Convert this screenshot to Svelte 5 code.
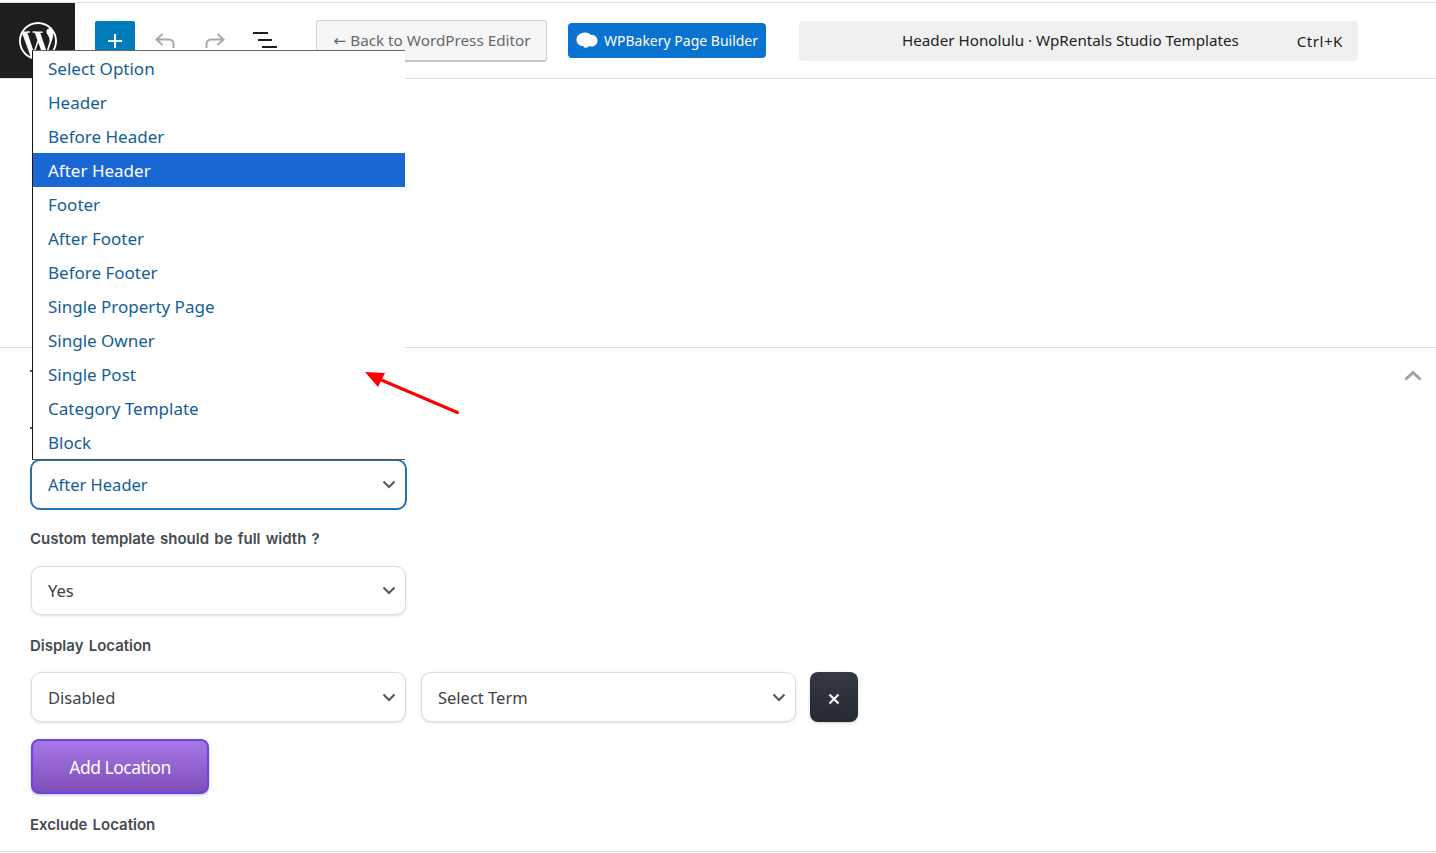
<script lang="ts">
  const options = [
    "Select Option",
    "Header",
    "Before Header",
    "After Header",
    "Footer",
    "After Footer",
    "Before Footer",
    "Single Property Page",
    "Single Owner",
    "Single Post",
    "Category Template",
    "Block"
  ];
  const selected = "After Header";
</script>

{#snippet chevron()}
  <svg class="chev" width="14" height="9" viewBox="0 0 14 9" aria-hidden="true">
    <path d="M1.5 1.5 7 7l5.5-5.5" fill="none" stroke="#50575e" stroke-width="2" />
  </svg>
{/snippet}

<div class="page">
  <header class="toolbar">
    <div class="wplogo">
      <svg width="38" height="38" viewBox="0 0 24 24" aria-hidden="true">
        <path fill="#fff" d="M21.469 6.825c.84 1.537 1.318 3.3 1.318 5.175 0 3.979-2.156 7.456-5.363 9.325l3.295-9.527c.615-1.54.82-2.771.82-3.864 0-.405-.026-.78-.07-1.11m-7.981.105c.647-.03 1.232-.105 1.232-.105.582-.075.514-.93-.067-.899 0 0-1.755.135-2.88.135-1.064 0-2.85-.15-2.85-.15-.585-.03-.661.855-.075.885 0 0 .54.061 1.125.09l1.68 4.605-2.37 7.08L5.354 6.9c.649-.03 1.234-.1 1.234-.1.585-.075.516-.93-.065-.896 0 0-1.746.138-2.874.138-.2 0-.438-.008-.69-.015C4.911 3.15 8.235 1.215 12 1.215c2.809 0 5.365 1.072 7.286 2.833-.046-.003-.091-.009-.141-.009-1.06 0-1.812.923-1.812 1.914 0 .89.513 1.643 1.06 2.531.411.72.89 1.643.89 2.977 0 .915-.354 1.994-.821 3.479l-1.075 3.585-3.9-11.61.001.014zM12 22.784c-1.059 0-2.081-.153-3.048-.437l3.237-9.406 3.315 9.087c.024.053.05.101.078.149-1.12.393-2.325.609-3.582.609M1.211 12c0-1.564.336-3.05.935-4.39L7.29 21.709C3.694 19.96 1.212 16.271 1.211 12M12 0C5.385 0 0 5.385 0 12s5.385 12 12 12 12-5.385 12-12S18.615 0 12 0" />
      </svg>
    </div>

    <div class="tools">
      <button class="plus" aria-label="Add block">
        <svg width="18" height="18" viewBox="0 0 18 18"><path d="M9 2v14M2 9h14" stroke="#fff" stroke-width="2" /></svg>
      </button>
      <span class="tool undo">
        <svg width="24" height="18" viewBox="0 0 24 18"><path d="M9.5 2 3.5 7.5l6 5.5M3.5 7.5H16c2.800 0 4.500 2 4.500 4.500V16" fill="none" stroke="#a7aaad" stroke-width="2" /></svg>
      </span>
      <span class="tool redo">
        <svg width="24" height="18" viewBox="0 0 24 18"><path d="M14.500 2l6 5.500-6 5.500M20.500 7.500H8C5.200 7.500 3.500 9.500 3.500 12V16" fill="none" stroke="#a7aaad" stroke-width="2" /></svg>
      </span>
      <span class="tool list">
        <svg width="24" height="18" viewBox="0 0 24 18"><path d="M0 1h15M5 8h14M9 15h15" stroke="#1e1e1e" stroke-width="2" /></svg>
      </span>
    </div>

    <button class="back"><span class="ar">←</span> Back to WordPress Editor</button>

    <button class="bakery">
      <svg width="22" height="18" viewBox="0 0 22 18" aria-hidden="true">
        <path fill="#fff" d="M9 .5c3 0 5 1 6 2.500 3-.5 6.500 1.500 6.500 5.500 0 3.500-2.500 6-5.500 6-1 0-2-.2-2.800-.6-1.200 1.500-3.200 2.100-4.700 1.600-.7-.3-1-.8-1.300-1.400C3.200 14 .5 11.500.5 7.800.5 3.500 4.500.5 9 .5z" />
      </svg>
      WPBakery Page Builder
    </button>

    <div class="command">
      <span class="doc">Header Honolulu · WpRentals Studio Templates</span>
      <span class="kbd">Ctrl+K</span>
    </div>
  </header>

  <main class="canvas"></main>

  <section class="panel">
    <div class="panel-head">
      <span class="tick"></span>
      <svg class="collapse" width="18" height="11" viewBox="0 0 18 11" aria-hidden="true">
        <path d="M1.500 9.500 9 2.500l7.500 7" fill="none" stroke="#a2a2a2" stroke-width="3" />
      </svg>
    </div>
    <span class="tick"></span>

    <div class="select focused">
      <span>After Header</span>
      {@render chevron()}
    </div>

    <div class="label first">Custom template should be full width ?</div>
    <div class="select">
      <span>Yes</span>
      {@render chevron()}
    </div>

    <div class="label display">Display Location</div>
    <div class="location">
      <div class="select">
        <span>Disabled</span>
        {@render chevron()}
      </div>
      <div class="select">
        <span>Select Term</span>
        {@render chevron()}
      </div>
      <button class="remove" aria-label="Remove">
        <svg width="12" height="12" viewBox="0 0 12 12"><path d="M1.500 1.500l9 9M10.500 1.500l-9 9" stroke="#fff" stroke-width="2.200" /></svg>
      </button>
    </div>

    <button class="add">Add Location</button>

    <div class="label exclude">Exclude Location</div>
  </section>

  <!-- open option list sits over everything -->
  <ul class="dropdown">
    {#each options as opt}
      <li class:active={opt === selected}>{opt}</li>
    {/each}
  </ul>

  <svg class="arrow" width="100" height="50" viewBox="0 0 100 50" aria-hidden="true">
    <path d="M92.500 42.500 14 9" stroke="#f00" stroke-width="3" stroke-linecap="round" />
    <path d="M0 2 20 3 13 17z" fill="#f00" />
  </svg>
</div>

<style>
  :global(body) {
    margin: 0;
    background: #fff;
    font-family: "Noto Sans", "Open Sans", sans-serif;
  }
  .page {
    position: relative;
    width: 1436px;
    height: 853px;
    padding-top: 2px;
    box-sizing: border-box;
    overflow: hidden;
  }
  button {
    font-family: inherit;
    cursor: pointer;
  }

  .toolbar {
    display: flex;
    align-items: center;
    height: 77px;
    box-sizing: border-box;
    border-top: 1px solid #e0e0e0;
    border-bottom: 1px solid #e0e0e0;
  }
  .wplogo {
    width: 75px;
    height: 75px;
    flex: none;
    background: #1e1e1e;
    display: flex;
    align-items: center;
    justify-content: center;
  }
  .tools {
    display: flex;
    align-items: center;
    margin-left: 20px;
  }
  .plus {
    width: 40px;
    height: 40px;
    padding: 0;
    border: 0;
    border-radius: 2px;
    background: #007cba;
    display: flex;
    align-items: center;
    justify-content: center;
  }
  .tool {
    display: flex;
  }
  .undo {
    margin-left: 18px;
  }
  .redo {
    margin-left: 26px;
  }
  .list {
    margin-left: 26px;
  }
  .back {
    margin-left: 39px;
    width: 231px;
    height: 42px;
    padding: 0 0 0 1px;
    box-sizing: border-box;
    border: 1px solid #d0d0d0;
    border-bottom: 2px solid #c4c4c4;
    border-radius: 3px;
    background: #f6f6f6;
    color: #646970;
    font-size: 15.250px;
  }
  .ar {
    font-family: "DejaVu Sans", sans-serif;
  }
  .bakery {
    margin-left: 21px;
    width: 198px;
    height: 35px;
    padding: 0;
    border: 0;
    border-radius: 4px;
    background: #0a72d1;
    color: #fff;
    font-size: 14px;
    display: flex;
    align-items: center;
    justify-content: center;
    gap: 6px;
  }
  .command {
    margin-left: 33px;
    width: 559px;
    height: 40px;
    box-sizing: border-box;
    border-radius: 4px;
    background: #f0f0f0;
    color: #1e1e1e;
    font-size: 15.200px;
    display: flex;
    align-items: center;
    padding: 0 15px 0 103px;
    justify-content: space-between;
  }
  .doc {
    margin-bottom: 2px;
  }
  .kbd {
    letter-spacing: 0.500px;
  }

  .canvas {
    height: 268px;
    border-bottom: 1px solid #e0e0e0;
  }

  .panel {
    padding: 0 30px;
    height: 504px;
    box-sizing: border-box;
    border-bottom: 1px solid #e0e0e0;
  }
  .panel-head {
    display: flex;
    justify-content: space-between;
    align-items: flex-start;
    padding-top: 22px;
    height: 79px;
    box-sizing: border-box;
    margin-right: -16px;
  }
  .tick {
    display: block;
    width: 2px;
    height: 2px;
    background: #555;
  }

  .select {
    width: 375px;
    height: 49px;
    margin-left: 1px;
    box-sizing: border-box;
    border: 1px solid #dcdce2;
    border-radius: 10px;
    box-shadow: 0 1px 3px rgba(60, 60, 90, 0.16);
    background: #fff;
    color: #3c434a;
    font-size: 16.500px;
    padding: 0 9px 0 16px;
    display: flex;
    align-items: center;
    justify-content: space-between;
  }
  .select.focused {
    width: 377px;
    height: 51px;
    margin: 30px 0 0;
    border: 2px solid #2271b1;
    color: #135e96;
    box-shadow: none;
  }
  .chev {
    flex: none;
  }

  .label {
    font-family: Inter, "Noto Sans", sans-serif;
    font-weight: 600;
    font-size: 15px;
    word-spacing: 1.400px;
    line-height: 20px;
    color: #454a52;
  }
  .label.first {
    margin: 19px 0 17px;
  }
  .label.display {
    margin: 21px 0 16px;
  }
  .location {
    display: flex;
    align-items: flex-start;
    gap: 15px;
  }
  .location .select {
    height: 50px;
  }
  .location .select + .select {
    margin-left: 0;
  }
  .remove {
    width: 48px;
    height: 50px;
    margin-left: -1px;
    padding: 3px 0 0;
    border: 0;
    border-radius: 8px;
    background: linear-gradient(#343841, #262a31);
    box-shadow: 0 1px 3px rgba(0, 0, 0, 0.2);
    display: flex;
    align-items: center;
    justify-content: center;
  }
  .add {
    display: block;
    width: 178px;
    height: 55px;
    margin: 17px 0 0 1px;
    padding: 0;
    box-sizing: border-box;
    border: 2px solid #6a45e0;
    border-radius: 8px;
    background: linear-gradient(#a677e6, #7e4fba);
    box-shadow: 0 1px 3px rgba(60, 30, 120, 0.3);
    color: #fff;
    font-size: 17.500px;
    letter-spacing: -0.500px;
  }
  .label.exclude {
    margin: 21px 0 0;
  }

  .dropdown {
    position: absolute;
    left: 32px;
    top: 50px;
    width: 373px;
    height: 410px;
    margin: 0;
    padding: 0;
    box-sizing: border-box;
    list-style: none;
    background: #fff;
    border-top: 1px solid #666;
    border-bottom: 1px solid #555;
    border-left: 1.500px solid #111;
    font-size: 17px;
    color: #135e96;
  }
  .dropdown li {
    height: 34px;
    line-height: 36px;
    padding-left: 15px;
  }
  .dropdown li.active {
    background: #1967d2;
    color: #fff;
  }
  .arrow {
    position: absolute;
    left: 365px;
    top: 370px;
  }
</style>
